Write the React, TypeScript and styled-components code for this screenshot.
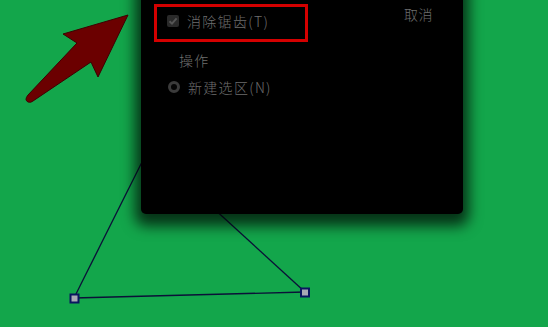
import React from "react";
import styled, { createGlobalStyle } from "styled-components";

const Global = createGlobalStyle`
  html, body { margin: 0; padding: 0; background: #13a64b; }
  #root { width: 548px; height: 327px; }
`;

const Page = styled.div`
  position: relative;
  width: 548px;
  height: 327px;
  overflow: hidden;
  background: #13a64b;
  font-family: "Noto Sans CJK SC", "Noto Sans", sans-serif;
`;

const Canvas = styled.svg`
  position: absolute;
  left: 0;
  top: 0;
  width: 548px;
  height: 327px;
`;

const Dialog = styled.div`
  position: absolute;
  left: 141px;
  top: -20px;
  width: 322px;
  height: 234px;
  background: #000;
  border-radius: 0 0 5px 5px;
  box-shadow: 0 6px 14px 6px rgba(0, 0, 0, 0.7);
  display: flex;
  justify-content: space-between;
  padding: 33px 30px 0 26px;
  box-sizing: border-box;
`;

const Column = styled.div`
  display: flex;
  flex-direction: column;
`;

const Row = styled.div<{ $indent?: number; $mt?: number }>`
  display: flex;
  align-items: center;
  gap: 8px;
  height: 16px;
  margin-left: ${(p) => p.$indent ?? 0}px;
  margin-top: ${(p) => p.$mt ?? 0}px;
`;

const Label = styled.span`
  color: #6e6e6e;
  font-size: 14px;
  line-height: 16px;
  font-weight: 300;
  letter-spacing: 1.3px;
  white-space: nowrap;
`;

const CheckBox = styled.span`
  width: 12px;
  height: 12px;
  border-radius: 2px;
  background: #2a2a2a;
  display: flex;
  align-items: center;
  justify-content: center;
`;

const Radio = styled.span`
  width: 12px;
  height: 12px;
  border-radius: 50%;
  box-sizing: border-box;
  border: 3px solid #3b3b3b;
  background: #050505;
  margin-left: 1px;
`;

const CancelButton = styled.span`
  color: #6e6e6e;
  font-size: 14px;
  line-height: 16px;
  font-weight: 300;
  margin-top: -7px;
  letter-spacing: 0.5px;
`;

const Highlight = styled.div`
  position: absolute;
  left: 154px;
  top: 4px;
  width: 154px;
  height: 38px;
  box-sizing: border-box;
  border: 3px solid #d40000;
`;

const Arrow = styled.svg`
  position: absolute;
  left: 0;
  top: 0;
  width: 160px;
  height: 120px;
`;

export default function App() {
  return (
    <Page>
      <Global />
      <Canvas viewBox="0 0 548 327">
        <g stroke="#0b1038" strokeWidth="1.3" fill="none">
          <line x1="74" y1="298" x2="150" y2="146" />
          <line x1="74" y1="298" x2="305" y2="292" />
          <line x1="305" y1="292" x2="200" y2="196" />
        </g>
        <rect x="70.5" y="294.5" width="8" height="8" fill="#a9a9b4" stroke="#0a1560" strokeWidth="2" />
        <rect x="301" y="288.5" width="8" height="8" fill="#a9a9b4" stroke="#0a1560" strokeWidth="2" />
      </Canvas>
      <Dialog>
        <Column>
          <Row>
            <CheckBox>
              <svg width="10" height="10" viewBox="0 0 10 10">
                <path d="M1.5 5.2 L4 7.6 L8.6 2.4" stroke="#555" strokeWidth="2" fill="none" />
              </svg>
            </CheckBox>
            <Label>消除锯齿(T)</Label>
          </Row>
          <Row $indent={12} $mt={23}>
            <Label>操作</Label>
          </Row>
          <Row $mt={11}>
            <Radio />
            <Label>新建选区(N)</Label>
          </Row>
        </Column>
        <Column>
          <CancelButton>取消</CancelButton>
        </Column>
      </Dialog>
      <Highlight />
      <Arrow viewBox="0 0 160 120">
        <path
          d="M128 15 L63 34 L77 43 L28 95 Q24 100 28 102 Q31 103 33 101 L91 62 L98 77 Z"
          fill="#6b0000"
          stroke="#3d0000"
          strokeWidth="1"
          strokeLinejoin="round"
        />
      </Arrow>
    </Page>
  );
}
